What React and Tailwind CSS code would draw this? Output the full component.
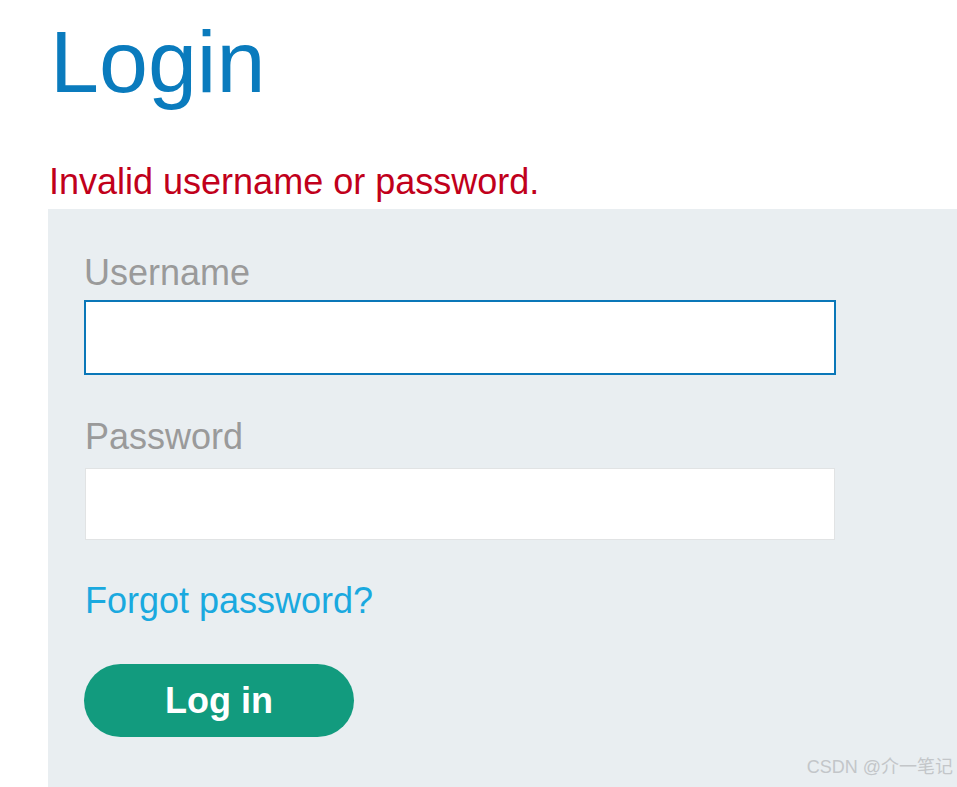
export default function App() {
  return (
    <div
      className="h-[787px] w-[957px] overflow-hidden bg-white pl-[48px]"
      style={{ fontFamily: '"Liberation Sans", Arial, sans-serif' }}
    >
      <h1 className="mt-[18px] pl-[2px] text-[88px] leading-none font-normal text-[#0a7bbd]">
        Login
      </h1>

      <p className="mt-[58px] pl-[1px] text-[36px] leading-none text-[#c1001b]">
        Invalid username or password.
      </p>

      <form className="mt-[9px] flex h-[600px] flex-col bg-[#e9eef1] pl-[36px] pt-[46px]">
        <label className="text-[36px] leading-none text-[#9a9a9a]">Username</label>
        <input
          type="text"
          className="mt-[9px] h-[75px] w-[752px] border-2 border-[#0a77b8] bg-white outline-none"
        />

        <label className="mt-[44px] pl-[1px] text-[36px] leading-none text-[#9a9a9a]">Password</label>
        <input
          type="password"
          className="ml-[1px] mt-[13px] h-[72px] w-[750px] border border-[#e1e3e4] bg-white outline-none"
        />

        <a href="#" className="mt-[43px] pl-[1px] text-[36px] leading-none text-[#1aa9df]">
          Forgot password?
        </a>

        <div className="mt-[45px] flex items-end justify-between pr-[4px]">
          <button
            type="button"
            className="flex h-[73px] w-[270px] items-center justify-center rounded-full bg-[#129b7e] text-[36px] font-bold text-white"
          >
            Log in
          </button>
          <span
            className="mb-[-44px] text-[18px] text-[#c3c6c9]"
            style={{ fontFamily: '"Liberation Sans", "Noto Sans CJK SC", sans-serif' }}
          >
            CSDN @介一笔记
          </span>
        </div>
      </form>
    </div>
  )
}
